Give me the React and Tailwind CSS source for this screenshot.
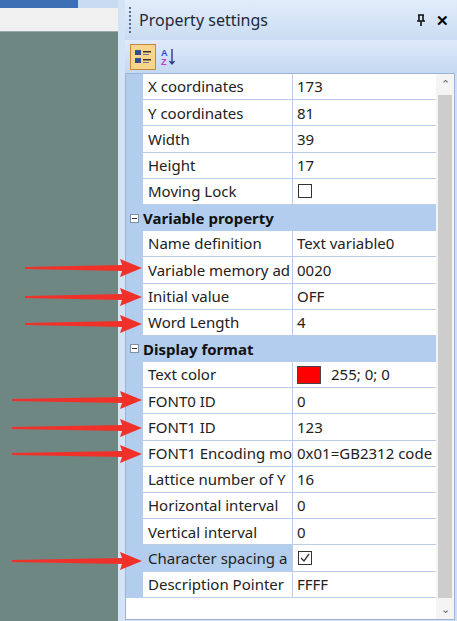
import React from "react";

const rows = [
  { n: "X coordinates", v: "173" },
  { n: "Y coordinates", v: "81" },
  { n: "Width", v: "39" },
  { n: "Height", v: "17" },
  { n: "Moving Lock", v: "", box: true },
  { h: "Variable property" },
  { n: "Name definition", v: "Text variable0" },
  { n: "Variable memory ad", v: "0020" },
  { n: "Initial value", v: "OFF" },
  { n: "Word Length", v: "4" },
  { h: "Display format" },
  { n: "Text color", v: "255; 0; 0", color: true },
  { n: "FONT0 ID", v: "0" },
  { n: "FONT1 ID", v: "123" },
  { n: "FONT1 Encoding mo", v: "0x01=GB2312 code" },
  { n: "Lattice number of Y", v: "16" },
  { n: "Horizontal interval", v: "0" },
  { n: "Vertical interval", v: "0" },
  { n: "Character spacing a", v: "", check: true, sel: true },
  { n: "Description Pointer", v: "FFFF" },
];

const arrowYs = [268, 297, 324, 400, 428, 454, 561];

export default function App() {
  return (
    <div className="relative w-[457px] h-[621px] flex overflow-hidden" style={{ fontFamily: '"Microsoft YaHei","Noto Sans",sans-serif' }}>
      <div className="w-[118px] flex flex-col bg-[#6f8782]">
        <div className="h-[8px] bg-[#c8dbf2] flex">
          <div className="w-[78px] bg-[#3d6fb5]" />
        </div>
        <div className="h-[24px] bg-[#f0f0f0] border-b border-[#9aa]" />
        <div className="flex-1" />
      </div>
      <div className="w-[7px] bg-[#d4e3f5]" />
      <div className="flex-1 flex flex-col bg-[#cfe0f5]">
        <div className="h-[40px] flex items-center pl-[4px] pr-[8px] bg-gradient-to-b from-[#e2edfa] to-[#cadcf3]">
          <div className="w-[2px] h-[26px] border-l-2 border-dotted border-[#5a6d88] mr-[8px]" />
          <span className="text-[16px] text-[#1e2a3a] flex-1">Property settings</span>
          <svg width="10" height="12" viewBox="0 0 10 12" className="mr-[10px]">
            <path d="M2 1h6M3 1v6M7 1v6M1 7h8M5 7v5" stroke="#111" strokeWidth="1.6" fill="none" />
          </svg>
          <span className="text-[15px] font-bold">✕</span>
        </div>
        <div className="h-[33px] flex items-center gap-[4px] px-[5px] bg-gradient-to-b from-[#dfeafa] to-[#c4d8f1]">
          <div className="w-[26px] h-[26px] border border-[#c58a3a] bg-[#f8d58a] flex items-center justify-center">
            <svg width="18" height="16" viewBox="0 0 18 16">
              <rect x="1" y="1" width="6" height="5" fill="#2f4f8f" />
              <rect x="9" y="2" width="8" height="1.5" fill="#333" />
              <rect x="9" y="5" width="6" height="1" fill="#777" />
              <rect x="1" y="9" width="6" height="5" fill="#2f4f8f" />
              <rect x="9" y="10" width="8" height="1.5" fill="#333" />
              <rect x="9" y="13" width="6" height="1" fill="#777" />
            </svg>
          </div>
          <svg width="16" height="18" viewBox="0 0 16 18">
            <text x="1" y="8" fontSize="9" fontWeight="bold" fill="#2a4bd0" fontFamily="Liberation Sans, sans-serif">A</text>
            <text x="1" y="17" fontSize="9" fontWeight="bold" fill="#c23ad0" fontFamily="Liberation Sans, sans-serif">Z</text>
            <path d="M12 1v15M9.5 13l2.5 3 2.5-3" stroke="#2a3b8a" strokeWidth="1.4" fill="none" />
          </svg>
        </div>
        <div className="flex-1 flex mr-[2px] border border-[#9cb4d6] bg-white mb-[1px]">
          <div className="flex-1 flex flex-col">
            {rows.map((r, i) =>
              r.h ? (
                <div key={i} className="h-[26.2px] flex items-center bg-[#b3cdee]">
                  <div className="w-[17px] flex justify-center">
                    <div className="w-[9px] h-[9px] border border-[#7f8fa6] bg-white flex items-center justify-center">
                      <div className="w-[5px] h-[1px] bg-[#333]" />
                    </div>
                  </div>
                  <span className="text-[15px] font-bold text-[#111]">{r.h}</span>
                </div>
              ) : (
                <div key={i} className="h-[26.2px] flex">
                  <div className="w-[17px] bg-[#b3cdee]" />
                  <div className={`w-[150px] border-r border-b border-[#b9cde8] pl-[5px] flex items-center text-[15px] text-[#222] whitespace-nowrap overflow-hidden ${r.sel ? "bg-[#b3cdee]" : ""}`}>{r.n}</div>
                  <div className="flex-1 border-b border-[#b9cde8] pl-[4px] flex items-center text-[15px] text-[#222] whitespace-nowrap overflow-hidden">
                    {r.box && <div className="w-[14px] h-[14px] border border-[#333] ml-[1px]" />}
                    {r.check && (
                      <div className="w-[14px] h-[14px] border border-[#333] ml-[1px] flex items-center justify-center">
                        <svg width="12" height="12" viewBox="0 0 12 12"><path d="M2 6l3 3 5-7" stroke="#333" strokeWidth="1.3" fill="none" /></svg>
                      </div>
                    )}
                    {r.color && <div className="w-[24px] h-[18px] bg-[#ff0000] border border-[#444] mr-[10px]" />}
                    {r.v}
                  </div>
                </div>
              )
            )}
            <div className="flex-1" />
          </div>
          <div className="w-[18px] flex flex-col items-center py-[3px] bg-[#f4f4f4]">
            <span className="text-[11px] text-[#666] leading-[14px]">⌃</span>
            <div className="flex-1 w-[14px] bg-[#cdcdcd] my-[4px]" />
            <span className="text-[11px] text-[#666] leading-[14px]">⌄</span>
          </div>
        </div>
      </div>
      <svg className="absolute left-0 top-0 pointer-events-none" width="457" height="621">
        {arrowYs.map((y, i) => (
          <polygon key={i} points={`${i < 3 ? 25 : 12},${y - 1} 122,${y - 3} 120,${y - 9} 142,${y} 120,${y + 9} 122,${y + 3} ${i < 3 ? 25 : 12},${y + 1}`} fill="#f0312a" />
        ))}
      </svg>
    </div>
  );
}
